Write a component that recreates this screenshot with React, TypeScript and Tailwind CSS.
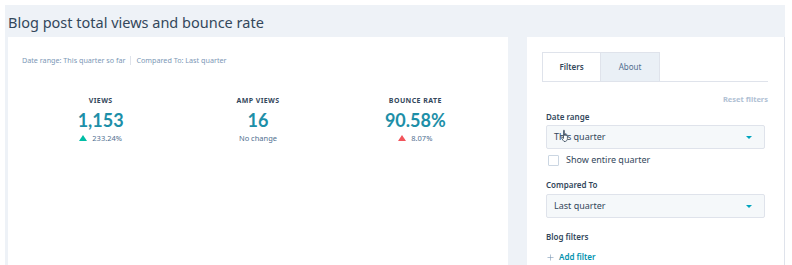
import { Plus } from 'lucide-react'

function Metric({ label, value, change, dir }: { label: string; value: string; change: string; dir?: 'up-good' | 'up-bad' }) {
  return (
    <div className="flex flex-col items-center">
      <div className="text-[7px] font-bold tracking-[0.06em] text-[#33475b] leading-[10px]">{label}</div>
      <div className="mt-[3px] text-[18px] font-bold text-[#1d8fa8] leading-[22px]" style={{ fontFamily: 'Lato, sans-serif' }}>{value}</div>
      <div className="mt-[2px] flex items-center gap-[5px] text-[7.5px] text-[#516f90] leading-[10px]">
        {dir && (
          <span
            className={
              dir === 'up-good'
                ? 'w-0 h-0 border-l-[4px] border-r-[4px] border-b-[6px] border-l-transparent border-r-transparent border-b-[#00bda5]'
                : 'w-0 h-0 border-l-[4px] border-r-[4px] border-b-[6px] border-l-transparent border-r-transparent border-b-[#f2545b]'
            }
          />
        )}
        <span>{change}</span>
      </div>
    </div>
  )
}

function Select({ text }: { text: string }) {
  return (
    <div className="relative flex items-center justify-between h-[24px] w-[219px] px-[7px] bg-[#f5f8fa] border border-[#dfe3eb] rounded-[2px] text-[9px] text-[#33475b]">
      <span>{text}</span>
      <span className="w-0 h-0 border-l-[3px] border-r-[3px] border-t-[3px] border-l-transparent border-r-transparent border-t-[#00a4bd] mr-[5px]" />
    </div>
  )
}

export default function App() {
  return (
    <div className="min-h-screen bg-white pt-[5px] pl-[5px] pr-[7px] overflow-hidden" style={{ fontFamily: '"Noto Sans", sans-serif' }}>
      <div className="bg-[#eef2f7]">
        <h1 className="h-[32px] pl-[3px] pt-[6px] text-[14.5px] leading-[22px] text-[#33475b]">
          Blog post total views and bounce rate
        </h1>
        <div className="flex pl-[3px] gap-[19px] h-[228px]">
          {/* Chart card */}
          <div className="w-[500px] bg-white px-[14px] pt-[18px]">
            <div className="flex items-center text-[7.2px] text-[#7c98b6] leading-[10px]">
              <span>Date range: This quarter so far</span>
              <span className="mx-[5px] h-[9px] border-l border-[#dfe3eb]" />
              <span>Compared To: Last quarter</span>
            </div>
            <div className="mt-[31px] grid grid-cols-3">
              <Metric label="VIEWS" value="1,153" change="233.24%" dir="up-good" />
              <Metric label="AMP VIEWS" value="16" change="No change" />
              <Metric label="BOUNCE RATE" value="90.58%" change="8.07%" dir="up-bad" />
            </div>
          </div>

          {/* Filters card */}
          <div className="flex-1 bg-white border-r border-[#dfe3eb] pl-[15px] pr-[16px] pt-[15px]">
            <div className="flex border-b border-[#dfe3eb]">
              <div className="w-[59px] h-[29px] flex items-center justify-center border-t border-l border-r border-[#dfe3eb] -mb-px bg-white text-[8px] font-semibold text-[#33475b]">
                Filters
              </div>
              <div className="w-[59px] h-[29px] flex items-center justify-center border-t border-r border-[#dfe3eb] bg-[#eaf0f6] text-[8px] text-[#516f90]">
                About
              </div>
            </div>
            <div className="pl-[4px]">
              <div className="mt-[12px] text-right text-[7.5px] font-bold text-[#b0c1d4] leading-[10px]">Reset filters</div>
              <div className="mt-[7px] text-[8px] font-semibold text-[#33475b] leading-[12px]">Date range</div>
              <div className="mt-[2px] relative">
                <Select text="This quarter" />
                <svg className="absolute left-[14px] top-[4px]" width="12" height="14" viewBox="0 0 12 14">
                  <path d="M3.5 1.5c0-.6.9-.6.9 0v5l.1-1c0-.6.9-.6.9 0v1l.1-.7c0-.6.9-.6.9 0v.9l.1-.5c0-.6.9-.6.9 0v3.3c0 1.8-1 3-2.8 3H5c-1 0-1.6-.5-2.1-1.3L1.3 8.6c-.3-.6.4-1 .8-.6l1.4 1.4z" fill="#fff" stroke="#33475b" strokeWidth="0.8" strokeLinejoin="round" />
                </svg>
              </div>
              <div className="mt-[5px] flex items-center gap-[7px]">
                <span className="w-[11px] h-[11px] border border-[#cbd6e2] rounded-[1px] bg-white ml-[2px]" />
                <span className="text-[9px] text-[#33475b] leading-[12px]">Show entire quarter</span>
              </div>
              <div className="mt-[13px] text-[8px] font-semibold text-[#33475b] leading-[12px]">Compared To</div>
              <div className="mt-[3px]">
                <Select text="Last quarter" />
              </div>
              <div className="mt-[13px] text-[8px] font-semibold text-[#33475b] leading-[12px]">Blog filters</div>
              <div className="mt-[8px] flex items-center gap-[4px] text-[8px] font-semibold text-[#0091ae] leading-[12px]">
                <Plus size={9} strokeWidth={1.6} className="text-[#7c98b6]" />
                <span>Add filter</span>
              </div>
            </div>
          </div>
        </div>
      </div>
    </div>
  )
}
